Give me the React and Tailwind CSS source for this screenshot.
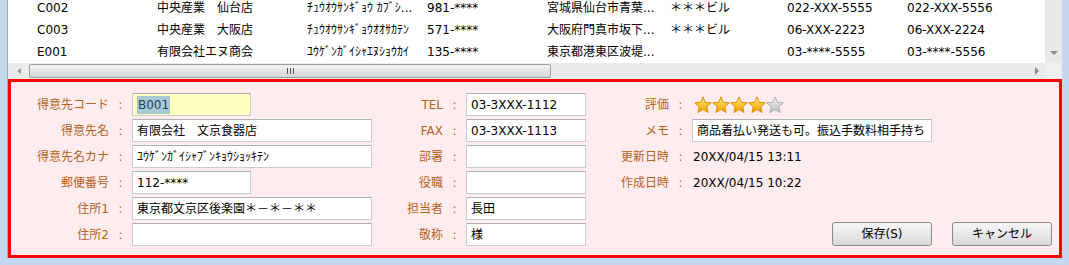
import React from 'react';

const FONT = "font-['DejaVu_Sans','Noto_Sans_CJK_JP',sans-serif]";

const rows = [
  ['C002', '中央産業　仙台店', 'ﾁｭｳｵｳｻﾝｷﾞｮｳ ｶﾌﾞｼ...', '981-****', '宮城県仙台市青葉...', '＊＊＊ビル', '022-XXX-5555', '022-XXX-5556'],
  ['C003', '中央産業　大阪店', 'ﾁｭｳｵｳｻﾝｷﾞｮｳｵｵｻｶﾃﾝ', '571-****', '大阪府門真市坂下...', '＊＊＊ビル', '06-XXX-2223', '06-XXX-2224'],
  ['E001', '有限会社エヌ商会', 'ﾕｳｹﾞﾝｶﾞｲｼｬｴﾇｼｮｳｶｲ', '135-****', '東京都港東区波堤...', '', '03-****-5555', '03-****-5556'],
];

const colWidths = ['w-[120px]', 'w-[150px]', 'w-[120px]', 'w-[120px]', 'w-[123px]', 'w-[117px]', 'w-[120px]', 'w-[120px]'];

function Star({ on }) {
  const id = on ? 'gold' : 'grey';
  return (
    <svg width="18" height="18" viewBox="0 0 16 16" className="shrink-0">
      <defs>
        <linearGradient id={id} x1="0" y1="0" x2="0" y2="1">
          <stop offset="0" stopColor={on ? '#ffec6e' : '#f4f4f4'} />
          <stop offset="1" stopColor={on ? '#f29b00' : '#bdbdbd'} />
        </linearGradient>
      </defs>
      <polygon
        points="8,0.8 10.1,5.6 15.3,6.1 11.4,9.6 12.5,14.7 8,12.1 3.5,14.7 4.6,9.6 0.7,6.1 5.9,5.6"
        fill={`url(#${id})`}
        stroke={on ? '#d98b00' : '#a9a9a9'}
        strokeWidth="0.8"
        strokeLinejoin="round"
      />
    </svg>
  );
}

function Field({ label, labelW, children }) {
  return (
    <div className="h-[23px] flex items-center">
      <span className={`${labelW} text-right text-[#b5631c] whitespace-nowrap`}>{label}</span>
      <span className="w-[23px] text-center text-[#b5631c]">:</span>
      {children}
    </div>
  );
}

function Input({ w, value, yellow }) {
  return (
    <div className={`${w} h-[23px] border border-[#c9ccd3] border-t-[#adb1b8] ${yellow ? 'bg-[#ffffbf]' : 'bg-white'} pl-[4px] flex items-center text-black whitespace-nowrap overflow-hidden`}>
      {value}
    </div>
  );
}

function Btn({ children }) {
  return (
    <button className="w-[100px] h-[24px] rounded-[3px] border border-[#8a8a8a] bg-gradient-to-b from-[#f6f6f6] to-[#d9d9d9] text-black text-[12px]">
      {children}
    </button>
  );
}

export default function App() {
  return (
    <div className={`w-[1069px] h-[265px] bg-[#c3d7ed] pl-[7px] pr-[7px] pb-[7px] flex flex-col text-[12px] ${FONT}`}>
      <div className="flex-1 flex flex-col border-l border-[#9aa6b2]">
        {/* grid */}
        <div className="h-[79px] flex">
          <div className="flex-1 flex flex-col">
            <div className="h-[63px] bg-white overflow-hidden">
              <div className="-mt-[3px]">
                {rows.map((r) => (
                  <div key={r[0]} className="h-[22px] flex items-center pl-[29px] text-black">
                    {r.map((c, i) => (
                      <span key={i} className={`${colWidths[i]} shrink-0 whitespace-nowrap overflow-hidden`}>{c}</span>
                    ))}
                  </div>
                ))}
              </div>
            </div>
            <div className="h-[16px] bg-[#ebebeb] flex items-center">
              <span className="w-[21px] flex justify-center">
                <span className="w-0 h-0 border-y-[3px] border-y-transparent border-r-[4px] border-r-[#9a9a9a]" />
              </span>
              <div className="w-[522px] h-[14px] rounded-[2px] border border-[#9e9e9e] bg-gradient-to-b from-[#f4f4f4] to-[#d6d6d6] flex items-center justify-center gap-[2px]">
                <span className="w-px h-[6px] bg-[#555]" />
                <span className="w-px h-[6px] bg-[#555]" />
                <span className="w-px h-[6px] bg-[#555]" />
              </div>
              <span className="flex-1" />
              <span className="w-[16px] flex justify-center">
                <span className="w-0 h-0 border-y-[4px] border-y-transparent border-l-[4px] border-l-[#8a8a8a]" />
              </span>
            </div>
          </div>
          <div className="w-[17px] flex flex-col">
            <div className="h-[63px] bg-[#e9e9e9] flex flex-col justify-end items-center pb-[8px]">
              <span className="w-0 h-0 border-x-[4px] border-x-transparent border-t-[4px] border-t-[#8a8a8a]" />
            </div>
            <div className="flex-1 bg-[#f0f0f0]" />
          </div>
        </div>

        {/* edit panel */}
        <div className="flex-1 border-[3px] border-[#ff0000] bg-[#ffecee] pt-[11px] flex">
          <div className="flex flex-col gap-[3px]">
            <Field label="得意先コード" labelW="w-[98px]">
              <Input w="w-[119px]" yellow value={<span className="bg-[#a8c9d0] text-[#1b3f6e] px-px">B001</span>} />
            </Field>
            <Field label="得意先名" labelW="w-[98px]"><Input w="w-[240px]" value="有限会社　文京食器店" /></Field>
            <Field label="得意先名カナ" labelW="w-[98px]"><Input w="w-[240px]" value="ﾕｳｹﾞﾝｶﾞｲｼｬﾌﾞﾝｷｮｳｼｮｯｷﾃﾝ" /></Field>
            <Field label="郵便番号" labelW="w-[98px]"><Input w="w-[119px]" value="112-****" /></Field>
            <Field label="住所1" labelW="w-[98px]"><Input w="w-[240px]" value="東京都文京区後楽園＊－＊－＊＊" /></Field>
            <Field label="住所2" labelW="w-[98px]"><Input w="w-[240px]" value="" /></Field>
          </div>
          <div className="flex flex-col gap-[3px]">
            <Field label="TEL" labelW="w-[71px]"><Input w="w-[120px]" value="03-3XXX-1112" /></Field>
            <Field label="FAX" labelW="w-[71px]"><Input w="w-[120px]" value="03-3XXX-1113" /></Field>
            <Field label="部署" labelW="w-[71px]"><Input w="w-[120px]" value="" /></Field>
            <Field label="役職" labelW="w-[71px]"><Input w="w-[120px]" value="" /></Field>
            <Field label="担当者" labelW="w-[71px]"><Input w="w-[120px]" value="長田" /></Field>
            <Field label="敬称" labelW="w-[71px]"><Input w="w-[120px]" value="様" /></Field>
          </div>
          <div className="flex-1 flex flex-col gap-[3px] pr-[7px]">
            <Field label="評価" labelW="w-[83px]">
              <div className="flex items-center pl-[2px]">
                <Star on /><Star on /><Star on /><Star on /><Star />
              </div>
            </Field>
            <Field label="メモ" labelW="w-[83px]"><Input w="w-[240px]" value="商品着払い発送も可。振込手数料相手持ち" /></Field>
            <Field label="更新日時" labelW="w-[83px]"><span className="pl-px text-black">20XX/04/15 13:11</span></Field>
            <Field label="作成日時" labelW="w-[83px]"><span className="pl-px text-black">20XX/04/15 10:22</span></Field>
            <div className="h-[23px]" />
            <div className="h-[24px] -mt-px flex justify-end gap-[20px]">
              <Btn>保存(S)</Btn>
              <Btn>キャンセル</Btn>
            </div>
          </div>
        </div>
      </div>
    </div>
  );
}
